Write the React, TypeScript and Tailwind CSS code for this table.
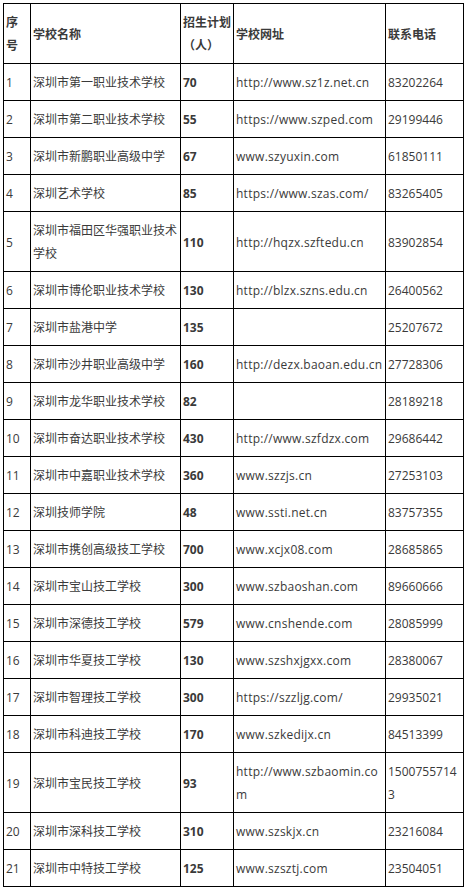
import React from "react";

type Row = [string, string, string, string, string];

const rows: Row[] = [
  ["1", "深圳市第一职业技术学校", "70", "http://www.sz1z.net.cn", "83202264"],
  ["2", "深圳市第二职业技术学校", "55", "https://www.szped.com", "29199446"],
  ["3", "深圳市新鹏职业高级中学", "67", "www.szyuxin.com", "61850111"],
  ["4", "深圳艺术学校", "85", "https://www.szas.com/", "83265405"],
  ["5", "深圳市福田区华强职业技术学校", "110", "http://hqzx.szftedu.cn", "83902854"],
  ["6", "深圳市博伦职业技术学校", "130", "http://blzx.szns.edu.cn", "26400562"],
  ["7", "深圳市盐港中学", "135", "", "25207672"],
  ["8", "深圳市沙井职业高级中学", "160", "http://dezx.baoan.edu.cn", "27728306"],
  ["9", "深圳市龙华职业技术学校", "82", "", "28189218"],
  ["10", "深圳市奋达职业技术学校", "430", "http://www.szfdzx.com", "29686442"],
  ["11", "深圳市中嘉职业技术学校", "360", "www.szzjs.cn", "27253103"],
  ["12", "深圳技师学院", "48", "www.ssti.net.cn", "83757355"],
  ["13", "深圳市携创高级技工学校", "700", "www.xcjx08.com", "28685865"],
  ["14", "深圳市宝山技工学校", "300", "www.szbaoshan.com", "89660666"],
  ["15", "深圳市深德技工学校", "579", "www.cnshende.com", "28085999"],
  ["16", "深圳市华夏技工学校", "130", "www.szshxjgxx.com", "28380067"],
  ["17", "深圳市智理技工学校", "300", "https://szzljg.com/", "29935021"],
  ["18", "深圳市科迪技工学校", "170", "www.szkedijx.cn", "84513399"],
  ["19", "深圳市宝民技工学校", "93", "http://www.szbaomin.com", "15007557143"],
  ["20", "深圳市深科技工学校", "310", "www.szskjx.cn", "23216084"],
  ["21", "深圳市中特技工学校", "125", "www.szsztj.com", "23504051"],
];

const cell =
  "border border-black pl-[2px] pr-[1px] pt-[7px] pb-[6px] align-middle break-all";

export default function App() {
  return (
    <div
      className="bg-white w-[467px] min-h-[895px] pt-[3px] pl-[3px] text-[12px] leading-[23px] text-[#3a3a3a]"
      style={{ fontFamily: '"Open Sans","Noto Sans CJK SC",sans-serif' }}
    >
      <table className="table-fixed border-collapse w-[460px]">
        <colgroup>
          <col className="w-[27px]" />
          <col className="w-[150px]" />
          <col className="w-[53px]" />
          <col className="w-[152px]" />
          <col className="w-[78px]" />
        </colgroup>
        <thead>
          <tr className="font-bold text-left">
            <th className={cell + " font-bold"}>序号</th>
            <th className={cell + " font-bold"}>学校名称</th>
            <th className={cell + " font-bold"}>招生计划（人）</th>
            <th className={cell + " font-bold"}>学校网址</th>
            <th className={cell + " font-bold"}>联系电话</th>
          </tr>
        </thead>
        <tbody>
          {rows.map((r) => (
            <tr key={r[0]}>
              <td className={cell}>{r[0]}</td>
              <td className={cell}>{r[1]}</td>
              <td className={cell + " font-bold"}>{r[2]}</td>
              <td className={cell + " tracking-[0.25px]"}>{r[3]}</td>
              <td className={cell}>{r[4]}</td>
            </tr>
          ))}
        </tbody>
      </table>
    </div>
  );
}
